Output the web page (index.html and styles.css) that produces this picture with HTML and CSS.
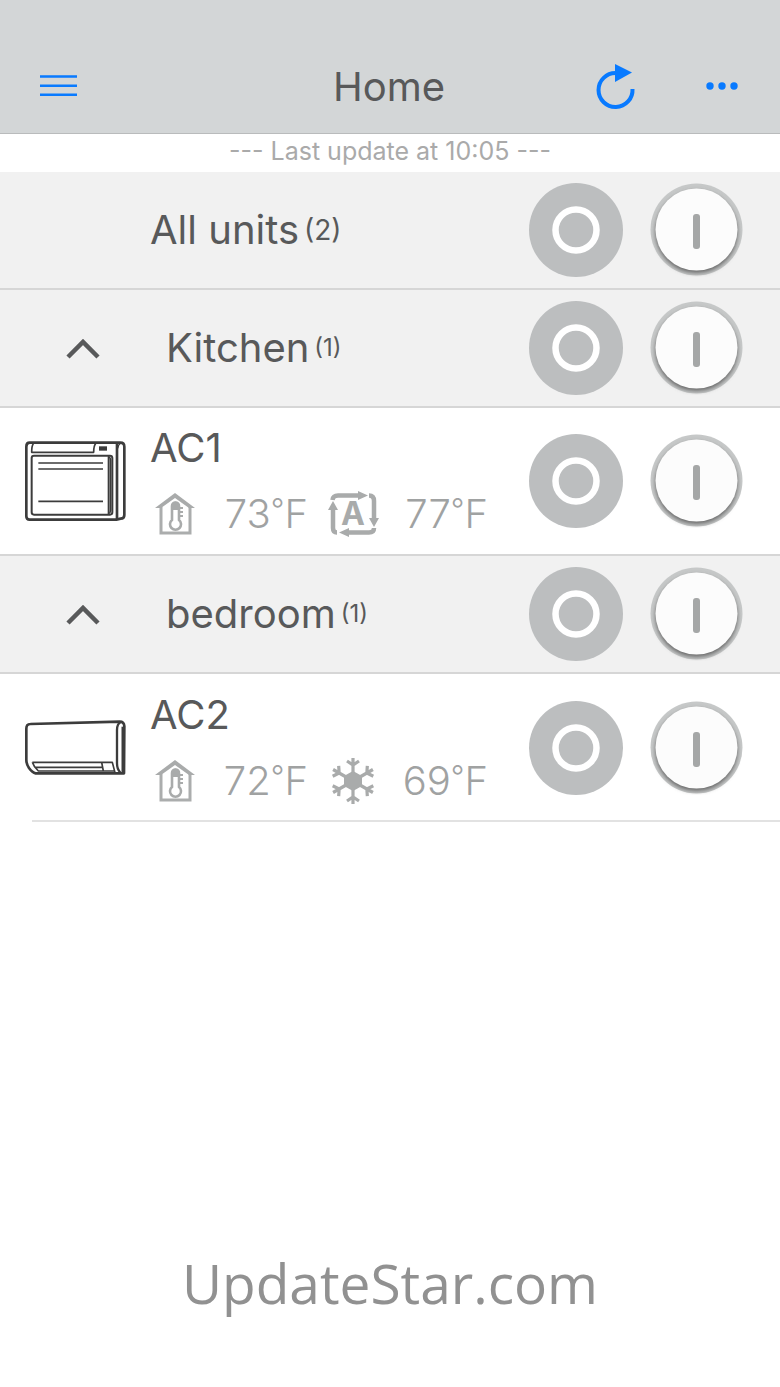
FILE: index.html
```html
<!DOCTYPE html>
<html lang="en">
<head>
    <meta charset="UTF-8" />
    <meta name="viewport" content="width=device-width, initial-scale=1">
    <title>Home</title>
    <link rel="stylesheet" href="styles.css">
</head>
<body>
    <!-- shared icons -->
    <svg class="sprite" aria-hidden="true">
      <symbol id="chevron" viewBox="0 0 34 22">
        <path d="M2 20 L17 5 L32 20" fill="none" stroke="currentColor" stroke-width="4.500" />
      </symbol>
      <symbol id="off" viewBox="0 0 94 94">
        <circle cx="47" cy="47" r="47" fill="#bcbebf" />
        <circle cx="47" cy="47" r="20.500" fill="none" stroke="#fff" stroke-width="6.500" />
      </symbol>
      <symbol id="on" viewBox="0 0 94 94">
        <circle cx="46.500" cy="46.500" r="46" fill="#c6c8c8" />
        <circle cx="46.500" cy="49" r="41" fill="#666" filter="url(#soft)" />
        <circle cx="46.500" cy="46.500" r="41" fill="#fcfcfc" />
        <rect x="43" y="31" width="7" height="35" rx="3" fill="#a5a7a7" />
      </symbol>
      <symbol id="room-temp" viewBox="0 0 40 44">
        <path d="M6 15 V41 H35 V15" fill="none" stroke="#abadad" stroke-width="3" />
        <path d="M0 16 L20 1 L40 16 H34 L20 6 L6 16 Z" fill="#a9abab" />
        <path d="M17 28 V14 a3.500 3.500 0 0 1 7 0 V28 a5.500 5.500 0 1 1 -7 0 Z" fill="none" stroke="#a9abab" stroke-width="2.600" />
        <path d="M18 18 V12 a2.500 2.500 0 0 1 5 0 V18 Z" fill="#a9abab" />
        <path d="M24 16 H28 M24 20 H28 M24 24 H28" stroke="#a9abab" stroke-width="2" />
      </symbol>
      <filter id="soft" x="-10%" y="-10%" width="120%" height="120%">
        <feGaussianBlur stdDeviation="2" />
      </filter>
    </svg>

    <header class="topbar">
      <button class="icon-btn menu" aria-label="Menu">
        <svg width="38" height="24" viewBox="0 0 38 24">
          <path d="M0 1.500 H37 M0 10.700 H37 M0 19.700 H37" stroke="#087aff" stroke-width="2.600" />
        </svg>
      </button>
      <h1 class="title">Home</h1>
      <div class="actions">
        <button class="icon-btn" aria-label="Refresh">
          <svg width="40" height="46" viewBox="0 0 40 46">
            <path d="M20 9 A17 17 0 1 0 36.500 25" fill="none" stroke="#087aff" stroke-width="4" />
            <path d="M19 0 L36 8.500 L19 18 Z" fill="#087aff" />
          </svg>
        </button>
        <button class="icon-btn more" aria-label="More">
          <svg width="32" height="10" viewBox="0 0 32 10">
            <g fill="#087aff">
              <circle cx="4" cy="4" r="3.700" />
              <circle cx="16" cy="4" r="3.700" />
              <circle cx="28" cy="4" r="3.700" />
            </g>
          </svg>
        </button>
      </div>
    </header>

    <main>
      <p class="status">--- Last update at 10:05 ---</p>

      <section class="row group">
        <h2 class="name">All units <span class="count">(2)</span></h2>
        <div class="switches">
          <button class="switch" aria-label="All units off"><svg><use href="#off" /></svg></button>
          <button class="switch" aria-label="All units on"><svg><use href="#on" /></svg></button>
        </div>
      </section>

      <section class="row group">
        <button class="toggle" aria-label="Collapse Kitchen"><svg width="34" height="22"><use href="#chevron" /></svg></button>
        <h2 class="name room">Kitchen <span class="count small">(1)</span></h2>
        <div class="switches">
          <button class="switch" aria-label="Kitchen off"><svg><use href="#off" /></svg></button>
          <button class="switch" aria-label="Kitchen on"><svg><use href="#on" /></svg></button>
        </div>
      </section>

      <section class="row unit">
        <div class="picture">
          <!-- floor standing unit -->
          <svg width="101" height="80" viewBox="0 0 303 240" fill="none" stroke="#3c3c3c" stroke-linejoin="round">
            <path d="M14 5 H286 Q298 5 298 17 V222 Q298 233 287 233 L274 236 H14 Q4 236 4 226 V17 Q4 5 14 5 Z" stroke-width="8" />
            <path d="M276 6 V234" stroke-width="8" />
            <path d="M288 6 Q280 10 278 22" stroke-width="4" />
            <path d="M25 8 Q20 14 20 34 H206 Q206 14 212 8" stroke-width="5" />
            <rect x="222" y="16" width="24" height="13" fill="#3c3c3c" stroke="none" />
            <rect x="20" y="44" width="242" height="177" rx="7" stroke-width="6" />
            <path d="M250 47 Q257 49 257 58 V208 Q257 216 250 219 Z" fill="#777" stroke-width="4" />
            <path d="M40 66 H234 M40 84 H234 M40 181 H234" stroke-width="5" />
          </svg>
        </div>
        <div class="info">
          <h3 class="name">AC1</h3>
          <div class="readings">
            <svg class="icon-room" width="40" height="44" role="img" aria-label="Room temperature"><use href="#room-temp" /></svg>
            <span class="temp">73<span class="degree">°</span>F</span>
            <svg class="icon-mode" width="52" height="46" viewBox="0 0 52 46" role="img" aria-label="Auto">
              <g fill="none" stroke="#a9abab" stroke-width="4.500">
                <path d="M4.500 9 Q5 4.500 10 4.500 H32" />
                <path d="M41 4.500 Q46 4.500 46 10 V29" />
                <path d="M46 37 Q46 41.500 41 41.500 H20" />
                <path d="M9 41.500 Q5 41.500 5 37 V18" />
              </g>
              <path d="M30 0 L40 4.500 L30 9 Z M41 27 H51 L46 36 Z M21 37 V46 L11 41.500 Z M0 19 L5 10 L10 19 Z" fill="#a9abab" />
              <text x="25" y="34" class="mode-letter">A</text>
            </svg>
            <span class="temp">77<span class="degree">°</span>F</span>
          </div>
        </div>
        <div class="switches">
          <button class="switch" aria-label="AC1 off"><svg><use href="#off" /></svg></button>
          <button class="switch" aria-label="AC1 on"><svg><use href="#on" /></svg></button>
        </div>
      </section>

      <section class="row group">
        <button class="toggle" aria-label="Collapse bedroom"><svg width="34" height="22"><use href="#chevron" /></svg></button>
        <h2 class="name room">bedroom <span class="count small">(1)</span></h2>
        <div class="switches">
          <button class="switch" aria-label="bedroom off"><svg><use href="#off" /></svg></button>
          <button class="switch" aria-label="bedroom on"><svg><use href="#on" /></svg></button>
        </div>
      </section>

      <section class="row unit last">
        <div class="picture">
          <!-- wall mounted unit -->
          <svg width="101" height="56" viewBox="0 0 303 168" fill="none" stroke="#3c3c3c" stroke-linejoin="round">
            <path d="M16 12 L284 5 Q297 5 298 18 L297 160 H32 Q22 158 12 144 Q4 132 4 120 V26 Q4 12 16 12 Z" stroke-width="8" />
            <path d="M287 6 Q276 12 276 30 V130 Q276 148 286 158" stroke-width="7" />
            <path d="M292 20 V156" stroke-width="5" />
            <path d="M22 127 H262 L270 158 M22 127 Q26 140 40 153 H268 M230 127 L235 153 M30 142 H232" stroke-width="5" />
          </svg>
        </div>
        <div class="info">
          <h3 class="name">AC2</h3>
          <div class="readings">
            <svg class="icon-room" width="40" height="44" role="img" aria-label="Room temperature"><use href="#room-temp" /></svg>
            <span class="temp">72<span class="degree">°</span>F</span>
            <svg class="icon-mode" width="52" height="46" viewBox="-25 -23 52 46" role="img" aria-label="Cooling">
              <path d="M0 -10 L9 -5 V5 L0 10 L-9 5 V-5 Z" fill="#a9abab" />
              <g fill="none" stroke="#a9abab" stroke-width="3.200">
                <path id="arm" d="M0 -8 V-23 M-6 -20 L0 -16 L6 -20" />
                <use href="#arm" transform="rotate(60)" />
                <use href="#arm" transform="rotate(120)" />
                <use href="#arm" transform="rotate(180)" />
                <use href="#arm" transform="rotate(240)" />
                <use href="#arm" transform="rotate(300)" />
              </g>
            </svg>
            <span class="temp">69<span class="degree">°</span>F</span>
          </div>
        </div>
        <div class="switches">
          <button class="switch" aria-label="AC2 off"><svg><use href="#off" /></svg></button>
          <button class="switch" aria-label="AC2 on"><svg><use href="#on" /></svg></button>
        </div>
      </section>
    </main>

    <footer class="site">UpdateStar.com</footer>
</body>
</html>
```
FILE: styles.css
```css
* {
  box-sizing: border-box;
}

body {
  margin: 0;
  min-height: 100vh;
  display: flex;
  flex-direction: column;
  background-color: #fff;
  color: #58595a;
  font-family: Inter, "Liberation Sans", sans-serif;
}

h1, h2, h3, p {
  margin: 0;
  font-weight: 400;
}

button {
  display: block;
  padding: 0;
  border: none;
  background: none;
  cursor: pointer;
}

button svg {
  display: block;
}

.sprite {
  position: absolute;
  width: 0;
  height: 0;
}

/* top bar */
.topbar {
  display: grid;
  grid-template-columns: 1fr auto 1fr;
  align-items: center;
  padding: 40px 42px 0 40px;
  height: 134px;
  background-color: #d3d6d7;
  border-bottom: 1px solid #b9bbbc;
}

.title {
  font-size: 40px;
  line-height: 48px;
}

.actions {
  display: flex;
  justify-content: flex-end;
  align-items: center;
  gap: 70px;
}

.status {
  height: 38px;
  line-height: 34px;
  text-align: center;
  font-size: 25px;
  color: #aaa;
}

/* list */
.row {
  display: flex;
  align-items: center;
  padding-right: 36px;
  border-bottom: 2px solid #d6d6d6;
}

.group {
  height: 118px;
  padding-left: 150px;
  background-color: #f1f1f1;
}

.group:has(.toggle) {
  padding-left: 66px;
}

.toggle {
  width: 100px;
  color: #58595a;
}

.name {
  font-size: 40px;
  line-height: 48px;
}

.group .name {
  display: flex;
  align-items: center;
  gap: 5px;
}

.count {
  font-size: 28px;
}

.small {
  font-size: 24px;
}

.unit {
  height: 148px;
}

.picture {
  width: 150px;
  padding-left: 25px;
}

.picture svg {
  display: block;
}

.info {
  display: flex;
  flex-direction: column;
  gap: 18px;
}

.readings {
  display: grid;
  grid-template-columns: 50px 108px 92px 88px;
  align-items: center;
  height: 48px;
}

.icon-room {
  justify-self: center;
}

.icon-mode {
  justify-self: center;
}

.temp {
  text-align: right;
  font-size: 40px;
  line-height: 48px;
  font-weight: 300;
  color: #a0a2a2;
}

.degree {
  font-size: 30px;
  line-height: 1;
  vertical-align: 8px;
}

.mode-letter {
  font-size: 32px;
  font-weight: 700;
  text-anchor: middle;
  fill: #a9abab;
}

.switches {
  display: flex;
  gap: 27px;
  margin-left: auto;
}

.switch svg {
  width: 94px;
  height: 94px;
}

.last {
  border-bottom: none;
  background: linear-gradient(#e2e2e2, #e2e2e2) 32px 100% / 100% 2px no-repeat;
}

.site {
  margin-top: auto;
  padding-bottom: 64px;
  text-align: center;
  font-family: "Open Sans", "Noto Sans", sans-serif;
  font-size: 55px;
  line-height: 80px;
  color: #919191;
}
```
